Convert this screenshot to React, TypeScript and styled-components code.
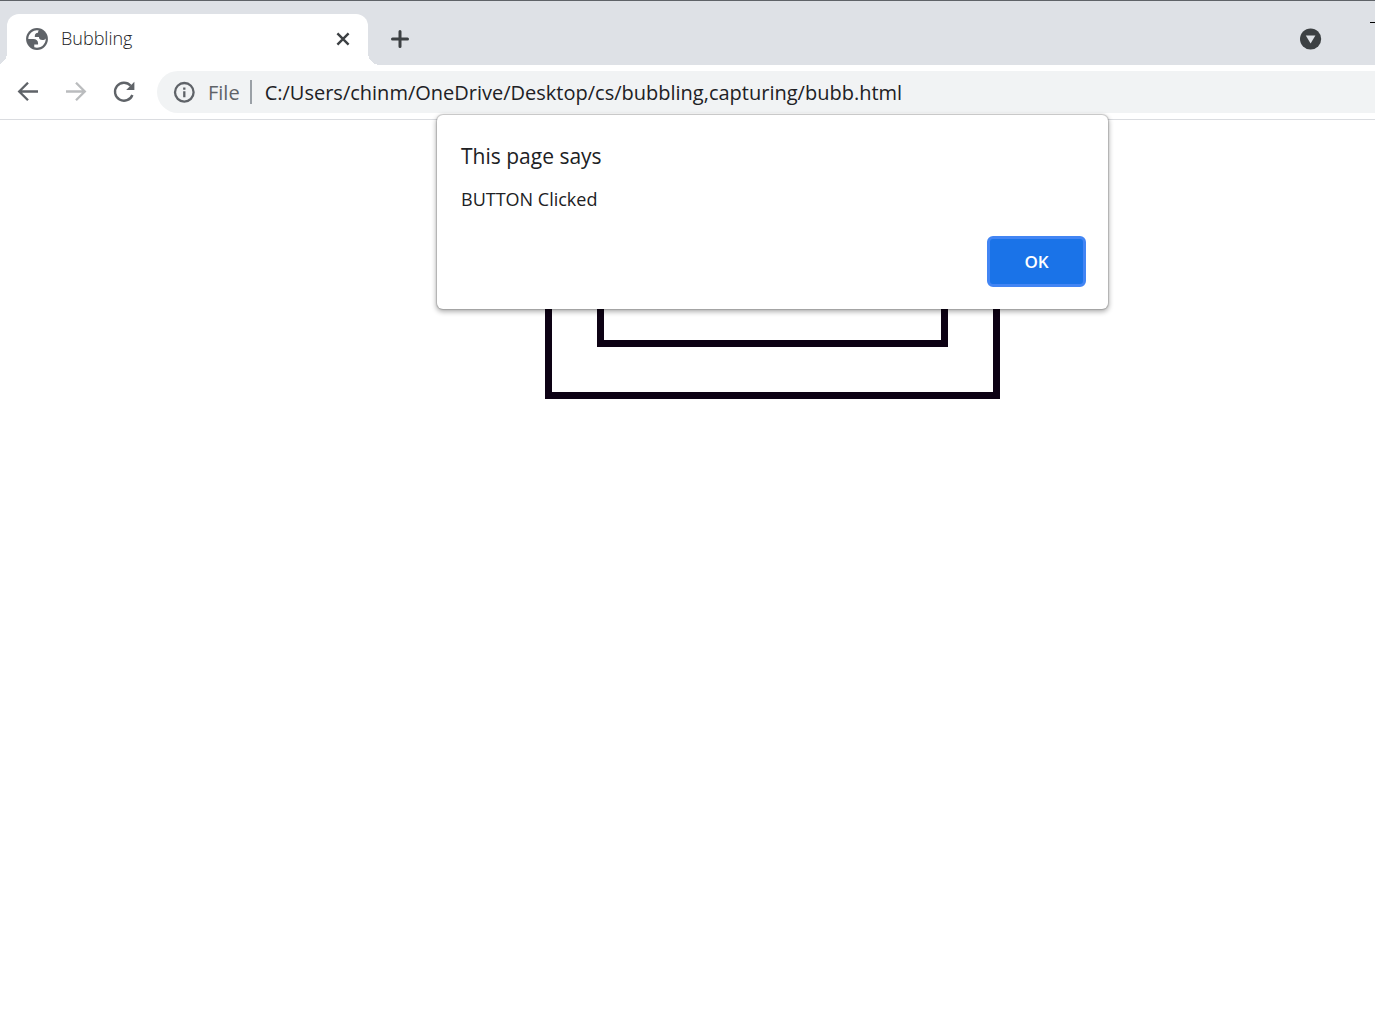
import React, { useState } from "react";
import styled, { createGlobalStyle } from "styled-components";

const GlobalStyle = createGlobalStyle`
  *, *::before, *::after { box-sizing: border-box; }
  body { margin: 0; background: #fff; overflow: hidden; }
  body, button, input { font-family: "Open Sans", "Noto Sans", sans-serif; }
`;

const Browser = styled.div`
  display: flex;
  flex-direction: column;
  min-height: 100vh;
`;

const TabStrip = styled.header`
  display: flex;
  height: 65px;
  padding: 13px 0 0 7px;
  background: #dee1e6;
  border-top: 1px solid #5f6368;
`;

const Tab = styled.div`
  position: relative;
  display: flex;
  align-items: center;
  width: 361px;
  padding: 0 12px 2px 18px;
  background: #fff;
  border-radius: 12px 12px 0 0;

  &::before, &::after {
    content: "";
    position: absolute;
    bottom: 0;
    width: 12px;
    height: 12px;
  }
  &::before {
    right: 100%;
    background: radial-gradient(circle at 0 0, transparent 12px, #fff 12px);
  }
  &::after {
    left: 100%;
    background: radial-gradient(circle at 100% 0, transparent 12px, #fff 12px);
  }
`;

const TabTitle = styled.span`
  flex: 1;
  padding: 0 0 2px 12px;
  font-size: 18px;
  font-weight: 300;
  line-height: 24px;
  color: #202124;
`;

const IconButton = styled.button<{ $size: number; $color?: string }>`
  display: flex;
  flex: none;
  align-items: center;
  justify-content: center;
  width: ${(p) => p.$size}px;
  height: ${(p) => p.$size}px;
  padding: 0;
  border: 0;
  background: none;
  color: ${(p) => p.$color ?? "#5f6368"};
`;

const StripActions = styled.div`
  display: flex;
  flex: 1;
  align-items: center;
  padding: 0 0 2px 19px;
`;

const WindowActions = styled.div`
  display: flex;
  align-items: center;
  gap: 46px;
  margin-left: auto;
`;

const MinimizeButton = styled.button`
  display: flex;
  width: 5px;
  height: 34px;
  padding: 0;
  border: 0;
  background: none;
  overflow: hidden;

  svg { flex: none; }
`;

const Toolbar = styled.nav`
  display: flex;
  align-items: center;
  height: 55px;
  padding: 0 0 1px 13px;
  border-bottom: 1px solid #dadce0;
`;

const NavButtons = styled.div`
  display: flex;
  gap: 18px;
  padding-right: 18px;
`;

const AddressBar = styled.div`
  display: flex;
  flex: 1;
  align-items: center;
  height: 42px;
  padding-left: 16px;
  background: #f1f3f4;
  border-radius: 21px 0 0 21px;
`;

const Scheme = styled.label`
  padding: 2px 10px 0 13px;
  font-size: 20px;
  line-height: 24px;
  color: #5f6368;
`;

const Divider = styled.span`
  width: 2px;
  height: 24px;
  margin-right: 13px;
  background: #9aa0a6;
`;

const AddressInput = styled.input`
  flex: 1;
  min-width: 0;
  height: 32px;
  padding: 2px 0 0;
  border: 0;
  outline: 0;
  background: none;
  font-size: 20px;
  line-height: 24px;
  color: #202124;
`;

const Page = styled.main`
  position: relative;
  display: flex;
  flex: 1;
  align-items: flex-start;
  justify-content: center;
  padding: 16px 0 0 170px;
`;

const Box = styled.div`
  flex: none;
  padding: 45px;
  border: 7px solid #0d0214;
`;

const InnerBox = styled(Box)`
  width: 351px;
  height: 159px;
`;

const DialogLayer = styled.div`
  position: absolute;
  inset: -5px 0 auto 170px;
  display: flex;
  justify-content: center;
`;

const Dialog = styled.section`
  display: flex;
  flex-direction: column;
  width: 671px;
  padding: 27px 22px 22px 24px;
  background: #fff;
  border-radius: 6px;
  box-shadow: 0 0 1px 1px rgba(0, 0, 0, 0.16), 0 2px 5px 1px rgba(0, 0, 0, 0.3);
`;

const DialogTitle = styled.h1`
  margin: 0;
  font-size: 21px;
  font-weight: 400;
  line-height: 28px;
  color: #202124;
`;

const DialogMessage = styled.p`
  margin: 17px 0 25px;
  font-size: 18px;
  line-height: 24px;
  color: #202124;
`;

const OkButton = styled.button`
  align-self: flex-end;
  width: 99px;
  height: 51px;
  padding: 0;
  border: 3px solid #4285f4;
  border-radius: 6px;
  background: #1a73e8;
  font-size: 17px;
  font-weight: 600;
  line-height: 24px;
  color: #fff;
`;

const Globe = () => (
  <svg width="24" height="24" viewBox="1 1 22 22" aria-hidden="true">
    <circle cx="12" cy="12" r="10" fill="#5f6368" />
    <path
      fill="#fff"
      d="M4 12h4.4c3.407.022 4.922 1.73 4.543 5.127H9.488v2.47a8.004 8.004 0 0 0 10.498-8.083C19.327 12.504 18.332 13 17 13c-2.137 0-3.206-.916-3.206-2.75h-3.748c-.274-2.728.683-4.092 2.87-4.092 0-.975.327-1.597.811-1.97A8.004 8.004 0 0 0 4 12z"
    />
  </svg>
);

const Cross = () => (
  <svg width="14" height="14" viewBox="0 0 14 14" fill="none" stroke="currentColor" strokeWidth="2.4">
    <path d="M1.4 1.4 12.6 12.6M12.6 1.4 1.4 12.6" />
  </svg>
);

const Plus = () => (
  <svg width="20" height="20" viewBox="0 0 20 20" fill="none" stroke="currentColor" strokeWidth="3" strokeLinecap="round">
    <path d="M10 2.5v15M2.5 10h15" />
  </svg>
);

const Arrow = ({ forward = false }: { forward?: boolean }) => (
  <svg width="22" height="20" viewBox="0 0 22 20" fill="none" stroke="currentColor" strokeWidth="2.3">
    <path d={forward ? "M1 9.5h18.5M11 .7 19.8 9.5 11 18.3" : "M21 9.5H2.5M11 .7 2.2 9.5 11 18.3"} />
  </svg>
);

const Reload = () => (
  <svg width="24" height="24" viewBox="0 0 24 24">
    <path d="M20.4 15A9 9 0 1 1 18.7 5.7" fill="none" stroke="currentColor" strokeWidth="2.4" />
    <path d="M22.4 1.8v8.2H14.2z" fill="currentColor" />
  </svg>
);

const Info = () => (
  <svg width="22" height="22" viewBox="0 0 22 22" fill="none" stroke="#5f6368" aria-hidden="true">
    <circle cx="11.3" cy="11.3" r="9.3" strokeWidth="2.3" />
    <path d="M11.3 10.2v6M11.3 6.4v2.3" strokeWidth="2.3" />
  </svg>
);

const TabSearch = () => (
  <svg width="22" height="22" viewBox="0 0 22 22">
    <circle cx="10.6" cy="11" r="10.6" fill="#3c4043" />
    <path d="M5.8 7.6h9.6L10.6 15.4z" fill="#dee1e6" />
  </svg>
);

export default function App() {
  const [address, setAddress] = useState("C:/Users/chinm/OneDrive/Desktop/cs/bubbling,capturing/bubb.html");
  return (
    <Browser>
      <GlobalStyle />
      <TabStrip>
        <Tab>
          <Globe />
          <TabTitle>Bubbling</TabTitle>
          <IconButton $size={26} $color="#3c4043" aria-label="Close tab">
            <Cross />
          </IconButton>
        </Tab>
        <StripActions>
          <IconButton $size={26} $color="#3c4043" aria-label="New tab">
            <Plus />
          </IconButton>
          <WindowActions>
            <IconButton $size={26} aria-label="Search tabs">
              <TabSearch />
            </IconButton>
            <MinimizeButton aria-label="Minimize">
              <svg width="14" height="2" viewBox="0 0 14 2">
                <path d="M0 .5h14" stroke="#000" />
              </svg>
            </MinimizeButton>
          </WindowActions>
        </StripActions>
      </TabStrip>
      <Toolbar>
        <NavButtons>
          <IconButton $size={30} aria-label="Back">
            <Arrow />
          </IconButton>
          <IconButton $size={30} $color="#babcbe" aria-label="Forward">
            <Arrow forward />
          </IconButton>
          <IconButton $size={30} aria-label="Reload">
            <Reload />
          </IconButton>
        </NavButtons>
        <AddressBar>
          <Info />
          <Scheme htmlFor="address">File</Scheme>
          <Divider />
          <AddressInput id="address" value={address} onChange={(e) => setAddress(e.target.value)} spellCheck={false} />
        </AddressBar>
      </Toolbar>
      <Page>
        <Box>
          <InnerBox />
        </Box>
        <DialogLayer>
          <Dialog role="dialog" aria-labelledby="dialog-title">
            <DialogTitle id="dialog-title">This page says</DialogTitle>
            <DialogMessage>BUTTON Clicked</DialogMessage>
            <OkButton>OK</OkButton>
          </Dialog>
        </DialogLayer>
      </Page>
    </Browser>
  );
}
